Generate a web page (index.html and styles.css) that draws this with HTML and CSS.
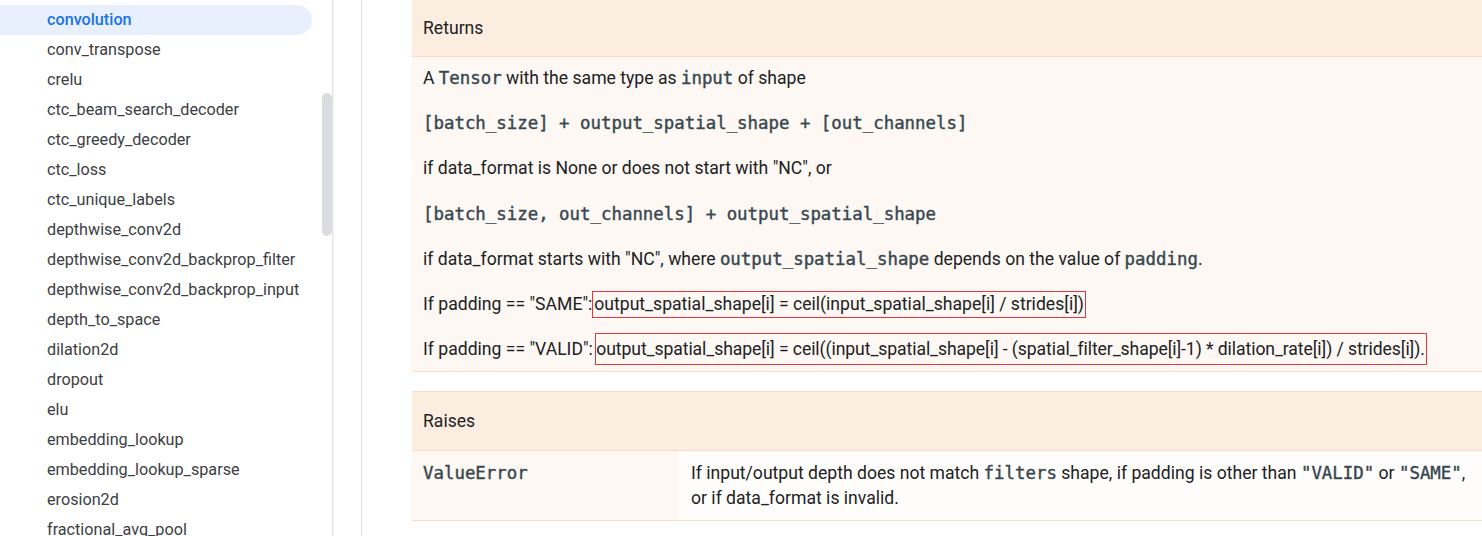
FILE: index.html
```html
<!DOCTYPE html>
<html>
<head>
<meta charset="utf-8">
<link rel="stylesheet" href="styles.css">
</head>
<body>
<div class="page">
  <nav class="sidebar">
    <ul class="nav-list">
      <li class="nav-item active">convolution</li>
      <li class="nav-item">conv_transpose</li>
      <li class="nav-item">crelu</li>
      <li class="nav-item">ctc_beam_search_decoder</li>
      <li class="nav-item">ctc_greedy_decoder</li>
      <li class="nav-item">ctc_loss</li>
      <li class="nav-item">ctc_unique_labels</li>
      <li class="nav-item">depthwise_conv2d</li>
      <li class="nav-item">depthwise_conv2d_backprop_filter</li>
      <li class="nav-item">depthwise_conv2d_backprop_input</li>
      <li class="nav-item">depth_to_space</li>
      <li class="nav-item">dilation2d</li>
      <li class="nav-item">dropout</li>
      <li class="nav-item">elu</li>
      <li class="nav-item">embedding_lookup</li>
      <li class="nav-item">embedding_lookup_sparse</li>
      <li class="nav-item">erosion2d</li>
      <li class="nav-item">fractional_avg_pool</li>
    </ul>
    <div class="scroll-thumb"></div>
  </nav>
  <div class="divider-zone"><div class="divider"></div></div>
  <main class="content">
    <table class="doc-table returns">
      <thead><tr><th>Returns</th></tr></thead>
      <tbody>
        <tr><td>
          <p>A <code>Tensor</code> with the same type as <code>input</code> of shape</p>
          <p><code>[batch_size] + output_spatial_shape + [out_channels]</code></p>
          <p>if data_format is None or does not start with "NC", or</p>
          <p><code>[batch_size, out_channels] + output_spatial_shape</code></p>
          <p>if data_format starts with "NC", where <code>output_spatial_shape</code> depends on the value of <code>padding</code>.</p>
          <p>If padding == "SAME":<span class="mark mark-same">output_spatial_shape[i] = ceil(input_spatial_shape[i] / strides[i])</span></p>
          <p>If padding == "VALID": <span class="mark mark-valid">output_spatial_shape[i] = ceil((input_spatial_shape[i] - (spatial_filter_shape[i]-1) * dilation_rate[i]) / strides[i]).</span></p>
        </td></tr>
      </tbody>
    </table>
    <table class="doc-table raises">
      <thead><tr><th colspan="2">Raises</th></tr></thead>
      <tbody>
        <tr>
          <td class="name-cell"><code>ValueError</code></td>
          <td class="desc-cell">If input/output depth does not match <code>filters</code> shape, if padding is other than <code>"VALID"</code> or <code>"SAME"</code>,<br>or if data_format is invalid.</td>
        </tr>
      </tbody>
    </table>
  </main>
</div>
</body>
</html>
```
FILE: styles.css
```css
html, body {
  margin: 0;
  padding: 0;
  background: #ffffff;
  overflow: hidden;
}
body {
  font-family: Roboto, "Liberation Sans", sans-serif;
  color: #202124;
  width: 1482px;
  height: 536px;
}
.page {
  display: flex;
  height: 536px;
}
.sidebar {
  position: relative;
  width: 332px;
  flex: none;
  border-right: 1px solid #e3e3e3;
  box-shadow: 1px 0 2px rgba(0,0,0,0.06);
}
.nav-list {
  list-style: none;
  margin: 0;
  padding: 5px 20px 0 0;
}
.nav-item {
  height: 30px;
  line-height: 29px;
  padding-left: 47px;
  font-size: 16.2px;
  color: #3c4043;
  white-space: nowrap;
}
.nav-item.active {
  background: #e8f0fe;
  color: #1a73e8;
  font-weight: 500;
  border-radius: 0 15px 15px 0;
}
.scroll-thumb {
  position: absolute;
  left: 322px;
  top: 93px;
  width: 10px;
  height: 143px;
  border-radius: 5px;
  background: #dadce0;
}
.divider-zone {
  width: 29px;
  flex: none;
  display: flex;
  justify-content: flex-end;
}
.divider {
  width: 1px;
  background: #e0e0e0;
}
.content {
  flex: 1;
  padding-left: 50px;
}
.doc-table {
  width: 100%;
  border-collapse: collapse;
  font-size: 17.6px;
  color: #202124;
}
.doc-table th {
  background: #fcede1;
  text-align: left;
  font-weight: 400;
  font-size: 17.6px;
  padding: 0 11px;
  border-bottom: 1px solid #fddcc0;
}
.returns th {
  height: 56px;
}
.doc-table td {
  background: #fdf8f3;
  vertical-align: top;
  border-bottom: 1px solid #fddcc0;
}
.returns td {
  padding: 8px 11px 8px;
}
.returns p {
  margin: 0;
  line-height: 27px;
  white-space: nowrap;
}
.returns p + p {
  margin-top: 18.2px;
}
code {
  font-family: "DejaVu Sans Mono", "Liberation Mono", monospace;
  font-size: 17.4px;
  color: #37474f;
  -webkit-text-stroke: 0.4px #37474f;
}
.mark {
  border: 1px solid #e8363c;
}
.mark-same {
  padding: 2px 1px 3px 1px;
}
.mark-valid {
  padding: 5px 1px 5px 0;
  margin-left: -2px;
  letter-spacing: -0.08px;
}
.raises {
  margin-top: 19px;
  border-top: 1px solid #fddcc0;
}
.raises th {
  height: 58px;
}
.raises td {
  line-height: 25px;
}
.name-cell {
  width: 245px;
  padding: 10px 11px 9px;
}
.desc-cell {
  background: #fffdfb !important;
  padding: 10px 12px 9px;
}
```
